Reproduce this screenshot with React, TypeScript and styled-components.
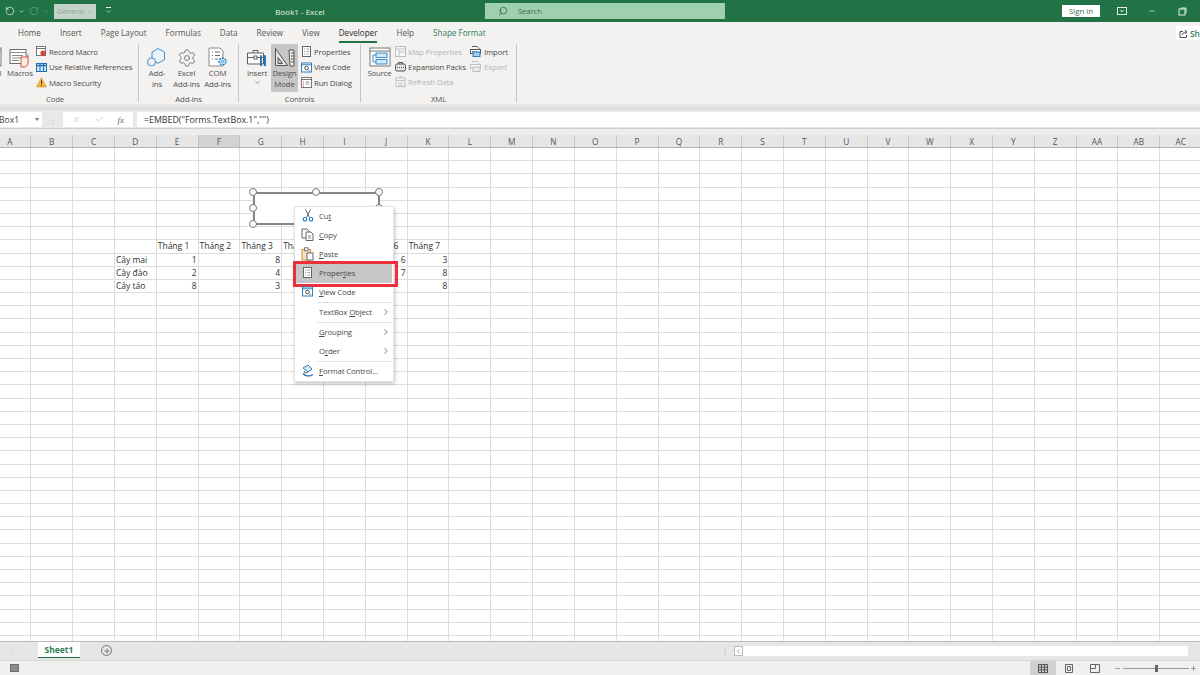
import React, { FC, ReactNode } from "react";
import styled, { createGlobalStyle } from "styled-components";
import { ChevronRight, ChevronDown, Search, RotateCcw, RotateCw, Minus, Plus, X, Check, Settings } from "lucide-react";

const GlobalStyle = createGlobalStyle`
    html, body {
        margin: 0;
        padding: 0;
        background: #fff;
    }
    * {
        box-sizing: border-box;
    }
`;

const COL_WIDTH = 41.82;
const ROW_HEIGHT = 13.2;
const columns = ["A","B","C","D","E","F","G","H","I","J","K","L","M","N","O","P","Q","R","S","T","U","V","W","X","Y","Z","AA","AB","AC"];

// row index -> column index -> value
const sheetData: Record<number, Record<number, string>> = {
    7: { 4: "Tháng 1", 5: "Tháng 2", 6: "Tháng 3", 7: "Tháng 4", 8: "Tháng 5", 9: "Tháng 6", 10: "Tháng 7" },
    8: { 3: "Cây mai", 4: "1", 6: "8", 9: "6", 10: "3" },
    9: { 3: "Cây đào", 4: "2", 6: "4", 9: "7", 10: "8" },
    10: { 3: "Cây táo", 4: "8", 6: "3", 10: "8" },
};

const tabs = ["Home", "Insert", "Page Layout", "Formulas", "Data", "Review", "View", "Developer", "Help", "Shape Format"];

/* ---------- ribbon icons ---------- */

const MacrosIcon = () => (
    <svg width="22" height="20" viewBox="0 0 22 20" fill="none">
        <rect x="1" y="1.5" width="16" height="14" fill="#fff" stroke="#6b6b6b" />
        <path d="M1 4.5h16M3 7.5h11M3 10h11M3 12.5h7" stroke="#8a8a8a" />
        <path d="M12 9h7v7l-2.5 3H12z" fill="#fbeee9" stroke="#d8553f" />
        <path d="M19 6.5v3" stroke="#d8553f" />
    </svg>
);

const AddInsIcon = () => (
    <svg width="22" height="21" viewBox="0 0 22 21" fill="none" stroke="#3f8fd0" strokeWidth="1">
        <path d="M12 1.5l6.5 3.7v7.4L12 16.3l-6 -3.5V5.2z" fill="#eaf3fa" />
        <circle cx="5.5" cy="15" r="4" fill="#f3f2f1" />
    </svg>
);

const ComIcon = () => (
    <svg width="22" height="21" viewBox="0 0 22 21" fill="none">
        <path d="M2 1h11l3 3v15H2z" fill="#fff" stroke="#8a8a8a" />
        <path d="M5 5h1M8 5h5M5 8.5h1M8 8.5h5M5 12h1M8 12h3" stroke="#6b6b6b" />
        <circle cx="15.5" cy="14.5" r="3.4" fill="#d6e8f6" stroke="#2f86c8" strokeWidth="1.6" strokeDasharray="2 1" />
        <circle cx="15.5" cy="14.5" r="1" fill="#fff" stroke="#2f86c8" />
    </svg>
);

const InsertIcon = () => (
    <svg width="22" height="20" viewBox="0 0 22 20" fill="none">
        <path d="M1.5 5h16v11h-16z" fill="#fff" stroke="#5f5f5f" />
        <path d="M1.5 9.5h16" stroke="#5f5f5f" />
        <path d="M7 5V2.5h5V5" stroke="#5f5f5f" />
        <rect x="8" y="8" width="3" height="3" fill="#fff" stroke="#5f5f5f" />
        <path d="M15 8v10M19 8v10" stroke="#2a78b8" strokeWidth="2" />
        <path d="M14 8h2M18 8h2" stroke="#2a78b8" strokeWidth="1.5" />
    </svg>
);

const DesignIcon = () => (
    <svg width="22" height="22" viewBox="0 0 22 22" fill="none">
        <path d="M1.5 1.5l12 17h-12z" fill="#e6e6e6" stroke="#555" />
        <path d="M4 10.5l4.5 6H4z" fill="#c8c6c4" stroke="#555" />
        <path d="M15 3h5v16h-4z" fill="#eee" stroke="#555" />
        <path d="M17 6h3M17 9h3M17 12h3M17 15h3" stroke="#555" />
    </svg>
);

const SourceIcon = () => (
    <svg width="22" height="21" viewBox="0 0 22 21" fill="none">
        <rect x="1" y="1" width="20" height="18" fill="#fff" stroke="#777" />
        <path d="M1 4h20" stroke="#777" />
        <rect x="7" y="6" width="11" height="4.5" fill="#d5e8f6" stroke="#3a8ccb" />
        <rect x="7" y="12.5" width="11" height="4.5" fill="#d5e8f6" stroke="#3a8ccb" />
        <path d="M4 8v7h3M4 8h3" stroke="#3a8ccb" />
    </svg>
);

const RecordIcon = () => (
    <svg width="11" height="11" viewBox="0 0 11 11" fill="none">
        <rect x="0.5" y="0.5" width="9" height="9" fill="#fff" stroke="#777" />
        <path d="M0.5 2.5h9" stroke="#777" />
        <circle cx="7" cy="7" r="2.6" fill="#d8443c" />
    </svg>
);

const RelativeIcon = () => (
    <svg width="11" height="11" viewBox="0 0 11 11" fill="none">
        <rect x="0.5" y="1.5" width="10" height="8" fill="#cfe4f5" stroke="#1f6fb4" />
        <path d="M0.5 3.5h10" stroke="#1f6fb4" strokeWidth="1.5" />
        <path d="M4 2v7M7.5 2v7" stroke="#1f6fb4" />
    </svg>
);

const WarningIcon = () => (
    <svg width="11" height="11" viewBox="0 0 11 11">
        <path d="M5.5 0.5l5 9.5h-10z" fill="#f2b53a" stroke="#c48a1e" strokeWidth="0.5" />
        <path d="M5.5 3.5v3.5M5.5 8v1" stroke="#333" />
    </svg>
);

const PropertiesIcon = () => (
    <svg width="11" height="11" viewBox="0 0 11 11" fill="none">
        <rect x="1.5" y="0.5" width="8" height="10" fill="#fff" stroke="#666" />
        <path d="M3 3h1M5.5 3H8M3 5.5h1M5.5 5.5H8M3 8h1M5.5 8H8" stroke="#777" strokeWidth="0.7" />
    </svg>
);

const ViewCodeIcon = () => (
    <svg width="11" height="11" viewBox="0 0 11 11" fill="none">
        <rect x="0.5" y="1" width="10" height="9" fill="#fff" stroke="#2f7fbd" />
        <path d="M0.5 2.8h10" stroke="#2f7fbd" />
        <circle cx="5.5" cy="6" r="1.8" stroke="#555" />
        <path d="M7 7.5l1.5 1.5" stroke="#555" />
    </svg>
);

const RunDialogIcon = () => (
    <svg width="11" height="11" viewBox="0 0 11 11" fill="none">
        <rect x="0.5" y="0.5" width="10" height="10" fill="#fff" stroke="#777" />
        <path d="M0.5 2.5h10" stroke="#777" />
        <path d="M2 5h1M2 7h1M2 9h1" stroke="#d8443c" />
        <path d="M4.5 5h4M4.5 7h4" stroke="#999" />
    </svg>
);

const GhostTableIcon = () => (
    <svg width="11" height="11" viewBox="0 0 11 11" fill="none">
        <rect x="0.5" y="0.5" width="10" height="10" fill="#f6f6f6" stroke="#bdbdbd" />
        <path d="M0.5 3h10M4 3v7.5M4 6h6.5" stroke="#c4c4c4" />
    </svg>
);

const ExpansionIcon = () => (
    <svg width="11" height="11" viewBox="0 0 11 11" fill="none">
        <path d="M3.5 3V1.5h4V3" stroke="#555" />
        <rect x="0.5" y="3" width="10" height="7" rx="1.5" fill="#dfe8e0" stroke="#555" />
        <path d="M2 6.5h7" stroke="#555" strokeDasharray="1 1" />
    </svg>
);

const RefreshIcon = () => (
    <svg width="11" height="11" viewBox="0 0 11 11" fill="none">
        <rect x="1" y="2" width="9" height="8.5" fill="#f6f6f6" stroke="#bdbdbd" />
        <path d="M1 4.5h9M3 7h5M3 9h5M4 0.5h3" stroke="#c4c4c4" />
    </svg>
);

const ImportIcon = () => (
    <svg width="12" height="11" viewBox="0 0 12 11" fill="none">
        <path d="M2 0.5h5l2 2v2" stroke="#555" fill="#fff" />
        <rect x="0.5" y="3.5" width="10" height="4" fill="#fff" stroke="#555" />
        <path d="M2 5.5h5" stroke="#555" strokeDasharray="1 1" />
        <rect x="3" y="6" width="7" height="4.5" fill="#a6cdea" stroke="#2f7fbd" />
    </svg>
);

const ExportIcon = () => (
    <svg width="12" height="11" viewBox="0 0 12 11" fill="none">
        <path d="M2 0.5h5l2 2v2" stroke="#c0c0c0" fill="#f8f8f8" />
        <rect x="0.5" y="3.5" width="10" height="4" fill="#f8f8f8" stroke="#c0c0c0" />
        <rect x="3" y="6" width="7" height="4.5" fill="#ececec" stroke="#c0c0c0" />
    </svg>
);

/* ---------- menu icons ---------- */

const CutIcon = () => (
    <svg width="12" height="13" viewBox="0 0 12 13" fill="none">
        <path d="M3.5 0.5L7.5 8.5M8.5 0.5L4.5 8.5" stroke="#666" />
        <circle cx="3" cy="10.3" r="1.8" stroke="#2f7fbd" strokeWidth="1.2" />
        <circle cx="9" cy="10.3" r="1.8" stroke="#2f7fbd" strokeWidth="1.2" />
    </svg>
);

const CopyIcon = () => (
    <svg width="13" height="13" viewBox="0 0 13 13" fill="none">
        <path d="M1 1h5l2 2v7H1z" fill="#fff" stroke="#666" />
        <path d="M5 4h5l2 2v6.5H5z" fill="#fff" stroke="#666" />
        <path d="M7 8h3M7 10h3" stroke="#888" />
    </svg>
);

const PasteIcon = () => (
    <svg width="13" height="14" viewBox="0 0 13 14" fill="none">
        <rect x="1" y="2.5" width="8.5" height="10.5" fill="#f6e3c4" stroke="#c98a2b" />
        <rect x="3.5" y="0.8" width="3.5" height="3" fill="#fff" stroke="#777" />
        <rect x="6" y="6" width="6" height="7" fill="#fff" stroke="#666" />
    </svg>
);

const FormatIcon = () => (
    <svg width="14" height="13" viewBox="0 0 14 13" fill="none">
        <path d="M2 4l5-3 4 4-4 3z" fill="#d5e8f6" stroke="#2f7fbd" />
        <path d="M7 8l-3 1-1-2" stroke="#666" />
        <path d="M2 9.5c2 3 7 3 10 1" stroke="#2f7fbd" strokeWidth="1.5" />
    </svg>
);

/* ---------- layout ---------- */

const Page = styled.div`
    width: 1200px;
    height: 675px;
    position: relative;
    overflow: hidden;
    display: flex;
    flex-direction: column;
    font-family: "Open Sans", "Liberation Sans", sans-serif;
    font-size: 8.3px;
    color: #444;
    background: #fff;
`;

const TitleBar = styled.div`
    height: 22px;
    flex: none;
    display: flex;
    align-items: center;
    background: #217346;
    color: #fff;
`;

const Qat = styled.div`
    width: 125px;
    padding-left: 4px;
    display: flex;
    align-items: center;
`;

const QatIcon = styled.span<{ $dim?: boolean; $w: number }>`
    width: ${p => p.$w}px;
    display: flex;
    flex-direction: column;
    align-items: center;
    color: #fff;
    opacity: ${p => (p.$dim ? 0.35 : 0.95)};
`;

const QatBar = styled.i`
    width: 5px;
    height: 1px;
    background: #fff;
`;

const StyleBox = styled.div`
    width: 42px;
    height: 15px;
    margin: 0 9px 0 5px;
    padding: 0 3px;
    display: flex;
    align-items: center;
    justify-content: space-between;
    background: #c4d3ca;
    color: #8fa398;
    font-size: 7.5px;
`;

const Title = styled.div`
    width: 350px;
    text-align: center;
    font-size: 8px;
    color: #e8f1ec;
`;

const SearchBox = styled.div`
    width: 240px;
    height: 16px;
    margin-left: 10px;
    padding-left: 13px;
    display: flex;
    align-items: center;
    gap: 10px;
    background: #9fd0ae;
    color: #3c6650;
    font-size: 7.5px;
`;

const SearchGlyph = styled(Search)`
    transform: scaleX(-1);
`;

const TitleRight = styled.div`
    margin-left: auto;
    margin-right: 3px;
    display: flex;
    align-items: center;
`;

const SignIn = styled.div`
    width: 38px;
    height: 12px;
    margin-right: 7px;
    display: flex;
    align-items: center;
    justify-content: center;
    background: #fff;
    color: #3d6f55;
    font-size: 7.8px;
`;

const WindowButton = styled.div`
    width: 30px;
    display: flex;
    justify-content: center;
    color: #dfeee6;
`;

const TabRow = styled.div`
    height: 22px;
    flex: none;
    display: flex;
    align-items: center;
    gap: 19px;
    padding-left: 18px;
    background: #f3f2f1;
`;

const Tab = styled.div<{ $active?: boolean; $accent?: boolean }>`
    height: 18px;
    margin-top: 1px;
    display: flex;
    align-items: center;
    color: ${p => (p.$accent ? "#2f7d55" : p.$active ? "#2c2c2c" : "#555")};
    border-bottom: 2px solid ${p => (p.$active ? "#217346" : "transparent")};
    font-size: 8.1px;
`;

const ShareButton = styled.div`
    margin-left: auto;
    margin-right: -20px;
    width: 44px;
    height: 14px;
    padding-left: 3px;
    display: flex;
    align-items: center;
    gap: 2px;
    background: #fff;
    color: #2f7d55;
    font-weight: 600;
`;

const Ribbon = styled.div`
    height: 60px;
    flex: none;
    display: flex;
    background: #f3f2f1;
    font-size: 7.8px;
    letter-spacing: -0.15px;
`;

const Group = styled.div<{ $width: number }>`
    width: ${p => p.$width}px;
    flex: none;
    display: flex;
    flex-direction: column;
    position: relative;
    overflow: hidden;
    &::after {
        content: "";
        position: absolute;
        right: 0;
        top: 0;
        bottom: 2px;
        width: 1px;
        background: #c8c6c4;
    }
`;

const GroupBody = styled.div<{ $pad?: number }>`
    height: 50px;
    flex: none;
    display: flex;
    padding-left: ${p => p.$pad ?? 0}px;
`;

const GroupLabel = styled.div`
    flex: 1;
    text-align: center;
    line-height: 10px;
    padding-right: 1px;
    color: #555;
`;

const GroupLabelLeft = styled(GroupLabel)`
    width: 111px;
    flex: none;
`;

const BigButton = styled.div<{ $w: number; $on?: boolean; $ml?: number }>`
    width: ${p => p.$w}px;
    height: 48px;
    flex: none;
    margin-left: ${p => p.$ml ?? 0}px;
    padding-top: 3px;
    display: flex;
    flex-direction: column;
    align-items: center;
    text-align: center;
    line-height: 11px;
    background: ${p => (p.$on ? "#c8c6c4" : "transparent")};
    color: #505050;
`;

const BigIcon = styled.div`
    height: 21px;
    flex: none;
    display: flex;
    align-items: center;
    justify-content: center;
`;

const GearIcon = styled(Settings)`
    color: #666;
`;

const SmallColumn = styled.div<{ $ml?: number; $w?: number; $tight?: boolean }>`
    margin-left: ${p => p.$ml ?? 0}px;
    width: ${p => (p.$w ? `${p.$w}px` : "auto")};
    flex: none;
    display: flex;
    flex-direction: column;
    & > div {
        height: ${p => (p.$tight ? 15 : 15.5)}px;
    }
`;

const SmallRow = styled.div<{ $off?: boolean }>`
    display: flex;
    align-items: center;
    gap: 2px;
    white-space: nowrap;
    color: ${p => (p.$off ? "#b5b5b5" : "#4a4a4a")};
`;

const StripShadow = styled.div`
    height: 6px;
    flex: none;
    background: linear-gradient(#e9e8e7, #dcdcdc);
`;

const FormulaBar = styled.div`
    height: 19px;
    flex: none;
    padding: 2px 0 1px;
    display: flex;
    background: #e8e8e8;
    border-bottom: 1px solid #cfcfcf;
`;

const NameBox = styled.div`
    width: 42px;
    flex: none;
    overflow: hidden;
    display: flex;
    align-items: center;
    justify-content: flex-end;
    padding-right: 3px;
    gap: 16px;
    background: #fff;
    font-size: 8.5px;
    color: #444;
    white-space: nowrap;
`;

const Caret = styled.span`
    width: 0;
    height: 0;
    border-left: 2.5px solid transparent;
    border-right: 2.5px solid transparent;
    border-top: 3px solid #777;
`;

const GripDots = styled.div`
    width: 21px;
    flex: none;
    display: flex;
    align-items: center;
    justify-content: center;
    color: #b8b8b8;
`;

const FunctionBox = styled.div`
    width: 70px;
    flex: none;
    display: flex;
    align-items: center;
    justify-content: space-around;
    padding: 0 2px;
    background: #fff;
    color: #bdbdbd;
`;

const FxLabel = styled.span`
    font-family: "Liberation Serif", serif;
    font-style: italic;
    font-size: 9px;
    color: #666;
`;

const FormulaInput = styled.div`
    flex: 1;
    margin-left: 4px;
    padding-left: 7px;
    display: flex;
    align-items: center;
    background: #fff;
    font-size: 8.8px;
    color: #333;
`;

const HeaderRow = styled.div`
    height: 19px;
    flex: none;
    padding-top: 6px;
    margin-left: -10.5px;
    display: flex;
    background: linear-gradient(#ededed 6px, #e6e6e6 6px);
    border-bottom: 1px solid #b4b4b4;
`;

const ColumnHeader = styled.div<{ $on?: boolean }>`
    width: ${COL_WIDTH}px;
    flex: none;
    display: flex;
    align-items: center;
    justify-content: center;
    border-right: 1px solid ${p => (p.$on ? "#c2c2c2" : "#c6c6c6")};
    background: ${p => (p.$on ? "#d2d2d2" : "transparent")};
    color: #555;
`;

const SheetArea = styled.div`
    flex: 1;
    min-height: 0;
    overflow: hidden;
    margin-left: -10.5px;
`;

const SheetGrid = styled.div`
    display: grid;
    grid-template-columns: repeat(${columns.length}, ${COL_WIDTH}px);
    grid-auto-rows: ${ROW_HEIGHT}px;
`;

const Cell = styled.div<{ $num?: boolean }>`
    padding: 0 1px;
    overflow: visible;
    white-space: nowrap;
    line-height: 12px;
    text-align: ${p => (p.$num ? "right" : "left")};
    border-right: 1px solid #dcdcdc;
    border-bottom: 1px solid #dcdcdc;
    font-size: 8.5px;
    color: #333;
`;

const TabStrip = styled.div`
    height: 19px;
    flex: none;
    display: flex;
    background: #e6e6e6;
    border-top: 1px solid #b9b9b9;
`;

const TabNav = styled.div`
    width: 38px;
    flex: none;
    padding-left: 8px;
    display: flex;
    align-items: center;
    color: #c4c4c4;
`;

const SheetTab = styled.div`
    width: 42px;
    height: 16px;
    flex: none;
    display: flex;
    align-items: center;
    justify-content: center;
    background: #fff;
    border-bottom: 1.5px solid #217346;
    color: #2f7d55;
    font-weight: 700;
    font-size: 8.5px;
`;

const AddSheet = styled.div`
    width: 11px;
    height: 11px;
    margin: 3px 0 0 21px;
    display: flex;
    align-items: center;
    justify-content: center;
    border: 1px solid #777;
    border-radius: 50%;
    color: #555;
`;

const ScrollArea = styled.div`
    margin-left: 609px;
    flex: 1;
    display: flex;
    align-items: flex-start;
    padding-top: 4px;
`;

const ScrollGrip = styled.div`
    width: 13px;
    height: 10px;
    line-height: 10px;
    color: #999;
`;

const ScrollBack = styled.div`
    width: 9px;
    height: 10px;
    display: flex;
    align-items: center;
    justify-content: center;
    background: #fff;
    border: 1px solid #bbb;
    color: #666;
`;

const BackGlyph = styled(ChevronRight)`
    transform: scaleX(-1);
`;

const ScrollTrack = styled.div`
    width: 445px;
    height: 10px;
    background: #fff;
`;

const StatusBar = styled.div`
    height: 15px;
    flex: none;
    display: flex;
    align-items: center;
    background: #f1f0ef;
    border-top: 1px solid #d6d6d6;
`;

const MacroBadge = styled.div`
    width: 9px;
    height: 8px;
    margin-left: 10px;
    background: #8a8a8a;
    border: 1px solid #6f6f6f;
`;

const ViewButtons = styled.div`
    margin-left: auto;
    margin-right: 5px;
    display: flex;
    align-items: center;
`;

const ViewButton = styled.div<{ $on?: boolean }>`
    width: 26px;
    height: 14px;
    display: flex;
    align-items: center;
    justify-content: center;
    background: ${p => (p.$on ? "#d2d0ce" : "transparent")};
`;

const Zoomer = styled.div`
    margin-right: 3px;
    margin-left: 1px;
    display: flex;
    align-items: center;
    gap: 1.5px;
    color: #666;
`;

const ZoomTrack = styled.div`
    width: 66px;
    height: 1px;
    position: relative;
    background: #9a9a9a;
`;

const ZoomThumb = styled.div`
    position: absolute;
    left: 32px;
    top: -3px;
    width: 3px;
    height: 7px;
    background: #666;
`;

/* ---------- overlays on the sheet ---------- */

const TextBoxFrame = styled.div`
    position: absolute;
    left: 253px;
    top: 192px;
    width: 127px;
    height: 33px;
    background: #fff;
    border: 2px solid #858585;
`;

const Handle = styled.span<{ $x: number; $y: number }>`
    position: absolute;
    left: ${p => p.$x}px;
    top: ${p => p.$y}px;
    width: 8px;
    height: 8px;
    margin: -4px 0 0 -4px;
    border: 1.2px solid #7a7a7a;
    border-radius: 50%;
    background: #fff;
`;

const ContextMenu = styled.div`
    position: absolute;
    left: 294px;
    top: 206px;
    width: 100px;
    height: 176px;
    padding: 0 1px;
    background: #fff;
    border: 1px solid #e3e3e3;
    box-shadow: 1px 2px 4px rgba(0, 0, 0, 0.22);
    color: #4a4a4a;
    font-size: 7.8px;
    letter-spacing: -0.15px;
`;

const MenuItem = styled.div<{ $on?: boolean }>`
    height: 19px;
    position: relative;
    display: flex;
    align-items: center;
    padding: 0 1px 1.5px 0;
    background: ${p => (p.$on ? "#c6c6c6" : "transparent")};
`;

const MenuIcon = styled.div`
    width: 23px;
    flex: none;
    display: flex;
    justify-content: center;
`;

const MenuText = styled.span`
    flex: 1;
    white-space: nowrap;
`;

const MenuSeparator = styled.div`
    height: 1px;
    margin-left: 21px;
    background: #e2e2e2;
`;

const RedMark = styled.div`
    position: absolute;
    left: -3px;
    right: -6px;
    top: -3px;
    bottom: -4px;
    border: 3px solid #ec2f38;
`;

const Big: FC<{ w: number; icon: ReactNode; on?: boolean; ml?: number; children: ReactNode }> = ({ w, icon, on, ml, children }) => (
    <BigButton $w={w} $on={on} $ml={ml}>
        <BigIcon>{icon}</BigIcon>
        {children}
    </BigButton>
);

const Small: FC<{ icon: ReactNode; off?: boolean; children: ReactNode }> = ({ icon, off, children }) => (
    <SmallRow $off={off}>
        {icon}
        <span>{children}</span>
    </SmallRow>
);

const Item: FC<{ icon?: ReactNode; on?: boolean; sub?: boolean; children: ReactNode }> = ({ icon, on, sub, children }) => (
    <MenuItem $on={on}>
        <MenuIcon>{icon}</MenuIcon>
        <MenuText>{children}</MenuText>
        {sub && <ChevronRight size={10} color="#666" />}
        {on && <RedMark />}
    </MenuItem>
);

const App: FC = () => {
    const rows = Array.from({ length: 38 }, (_, r) => r);

    return (
        <Page>
            <GlobalStyle />
            <TitleBar>
                <Qat>
                    <QatIcon $w={12}><RotateCcw size={10} strokeWidth={1.6} /></QatIcon>
                    <QatIcon $w={11}><ChevronDown size={7} /></QatIcon>
                    <QatIcon $w={14} $dim><RotateCw size={10} strokeWidth={1.6} /></QatIcon>
                    <QatIcon $w={8} $dim><ChevronDown size={7} /></QatIcon>
                    <StyleBox>General<ChevronDown size={7} /></StyleBox>
                    <QatIcon $w={6}><QatBar /><ChevronDown size={7} /></QatIcon>
                </Qat>
                <Title>Book1 - Excel</Title>
                <SearchBox>
                    <SearchGlyph size={10} />
                    <span>Search</span>
                </SearchBox>
                <TitleRight>
                    <SignIn>Sign in</SignIn>
                    <WindowButton>
                        <svg width="10" height="8" viewBox="0 0 10 8" fill="none" stroke="currentColor">
                            <rect x="0.5" y="0.5" width="9" height="7" />
                            <path d="M3.5 3l1.5 2 1.5-2" />
                        </svg>
                    </WindowButton>
                    <WindowButton><Minus size={8} /></WindowButton>
                    <WindowButton>
                        <svg width="9" height="9" viewBox="0 0 9 9" fill="none" stroke="currentColor">
                            <rect x="1" y="2" width="6" height="6" />
                            <path d="M3 2V1h5v5H7" />
                        </svg>
                    </WindowButton>
                </TitleRight>
            </TitleBar>

            <TabRow>
                {tabs.map(t => (
                    <Tab key={t} $active={t === "Developer"} $accent={t === "Shape Format"}>{t}</Tab>
                ))}
                <ShareButton>
                    <svg width="9" height="9" viewBox="0 0 9 9" fill="none" stroke="#555">
                        <path d="M4 2.5H1v6h6.5V6M3.5 6c0-2 1.5-3 4-3M6 1l2 2-2 2" />
                    </svg>
                    Share
                </ShareButton>
            </TabRow>

            <Ribbon>
                <Group $width={139}>
                    <GroupBody>
                        <Big w={28} ml={-23} icon={<SourceIcon />}>Visual Basic</Big>
                        <Big w={32} ml={-1} icon={<MacrosIcon />}>Macros</Big>
                        <SmallColumn>
                            <Small icon={<RecordIcon />}>Record Macro</Small>
                            <Small icon={<RelativeIcon />}>Use Relative References</Small>
                            <Small icon={<WarningIcon />}>Macro Security</Small>
                        </SmallColumn>
                    </GroupBody>
                    <GroupLabelLeft>Code</GroupLabelLeft>
                </Group>
                <Group $width={100}>
                    <GroupBody $pad={4}>
                        <Big w={28} icon={<AddInsIcon />}>Add-<br />ins</Big>
                        <Big w={31} icon={<GearIcon size={20} strokeWidth={1} />}>Excel<br />Add-ins</Big>
                        <Big w={31} icon={<ComIcon />}>COM<br />Add-ins</Big>
                    </GroupBody>
                    <GroupLabel>Add-ins</GroupLabel>
                </Group>
                <Group $width={122}>
                    <GroupBody $pad={4}>
                        <Big w={28} icon={<InsertIcon />}>Insert<br /><ChevronDown size={7} /></Big>
                        <Big w={27} on icon={<DesignIcon />}>Design<br />Mode</Big>
                        <SmallColumn $ml={3}>
                            <Small icon={<PropertiesIcon />}>Properties</Small>
                            <Small icon={<ViewCodeIcon />}>View Code</Small>
                            <Small icon={<RunDialogIcon />}>Run Dialog</Small>
                        </SmallColumn>
                    </GroupBody>
                    <GroupLabel>Controls</GroupLabel>
                </Group>
                <Group $width={156}>
                    <GroupBody $pad={5}>
                        <Big w={27} icon={<SourceIcon />}>Source</Big>
                        <SmallColumn $ml={2} $w={75} $tight>
                            <Small off icon={<GhostTableIcon />}>Map Properties</Small>
                            <Small icon={<ExpansionIcon />}>Expansion Packs</Small>
                            <Small off icon={<RefreshIcon />}>Refresh Data</Small>
                        </SmallColumn>
                        <SmallColumn $tight>
                            <Small icon={<ImportIcon />}>Import</Small>
                            <Small off icon={<ExportIcon />}>Export</Small>
                        </SmallColumn>
                    </GroupBody>
                    <GroupLabel>XML</GroupLabel>
                </Group>
            </Ribbon>
            <StripShadow />

            <FormulaBar>
                <NameBox>TextBox1<Caret /></NameBox>
                <GripDots>⋮</GripDots>
                <FunctionBox>
                    <X size={9} />
                    <Check size={9} />
                    <FxLabel>fx</FxLabel>
                </FunctionBox>
                <FormulaInput>=EMBED("Forms.TextBox.1","")</FormulaInput>
            </FormulaBar>

            <HeaderRow>
                {columns.map(c => (
                    <ColumnHeader key={c} $on={c === "F"}>{c}</ColumnHeader>
                ))}
            </HeaderRow>

            <SheetArea>
                <SheetGrid>
                    {rows.map(r =>
                        columns.map((c, i) => {
                            const value = sheetData[r]?.[i];
                            return (
                                <Cell key={c + r} $num={value !== undefined && /^\d+$/.test(value)}>
                                    {value}
                                </Cell>
                            );
                        })
                    )}
                </SheetGrid>
            </SheetArea>

            <TabStrip>
                <TabNav>⋮</TabNav>
                <SheetTab>Sheet1</SheetTab>
                <AddSheet><Plus size={8} /></AddSheet>
                <ScrollArea>
                    <ScrollGrip>⋮</ScrollGrip>
                    <ScrollBack><BackGlyph size={7} /></ScrollBack>
                    <ScrollTrack />
                </ScrollArea>
            </TabStrip>

            <StatusBar>
                <MacroBadge />
                <ViewButtons>
                    <ViewButton $on>
                        <svg width="10" height="9" viewBox="0 0 10 9" fill="none" stroke="#555">
                            <path d="M0.5 0.5h9v8h-9zM0.5 3.2h9M0.5 5.8h9M3.5 0.5v8M6.5 0.5v8" />
                        </svg>
                    </ViewButton>
                    <ViewButton>
                        <svg width="10" height="9" viewBox="0 0 10 9" fill="none" stroke="#666">
                            <path d="M1.5 0.5h7v8h-7zM3.5 2.5h3v4h-3z" />
                        </svg>
                    </ViewButton>
                    <ViewButton>
                        <svg width="10" height="9" viewBox="0 0 10 9" fill="none" stroke="#666">
                            <path d="M0.5 0.5h9v8h-9zM5.5 0.5v4h-5" />
                        </svg>
                    </ViewButton>
                </ViewButtons>
                <Zoomer>
                    <Minus size={7} />
                    <ZoomTrack><ZoomThumb /></ZoomTrack>
                    <Plus size={7} />
                </Zoomer>
            </StatusBar>

            <TextBoxFrame>
                <Handle $x={-2} $y={-2} />
                <Handle $x={61} $y={-2} />
                <Handle $x={124} $y={-2} />
                <Handle $x={-2} $y={14} />
                <Handle $x={124} $y={14} />
                <Handle $x={-2} $y={30} />
            </TextBoxFrame>

            <ContextMenu>
                <Item icon={<CutIcon />}>Cu<u>t</u></Item>
                <Item icon={<CopyIcon />}><u>C</u>opy</Item>
                <Item icon={<PasteIcon />}><u>P</u>aste</Item>
                <Item icon={<PropertiesIcon />} on>Proper<u>t</u>ies</Item>
                <Item icon={<ViewCodeIcon />}><u>V</u>iew Code</Item>
                <MenuSeparator />
                <Item sub>TextBox <u>O</u>bject</Item>
                <MenuSeparator />
                <Item sub><u>G</u>rouping</Item>
                <Item sub>O<u>r</u>der</Item>
                <MenuSeparator />
                <Item icon={<FormatIcon />}><u>F</u>ormat Control...</Item>
            </ContextMenu>
        </Page>
    );
};

export default App;
